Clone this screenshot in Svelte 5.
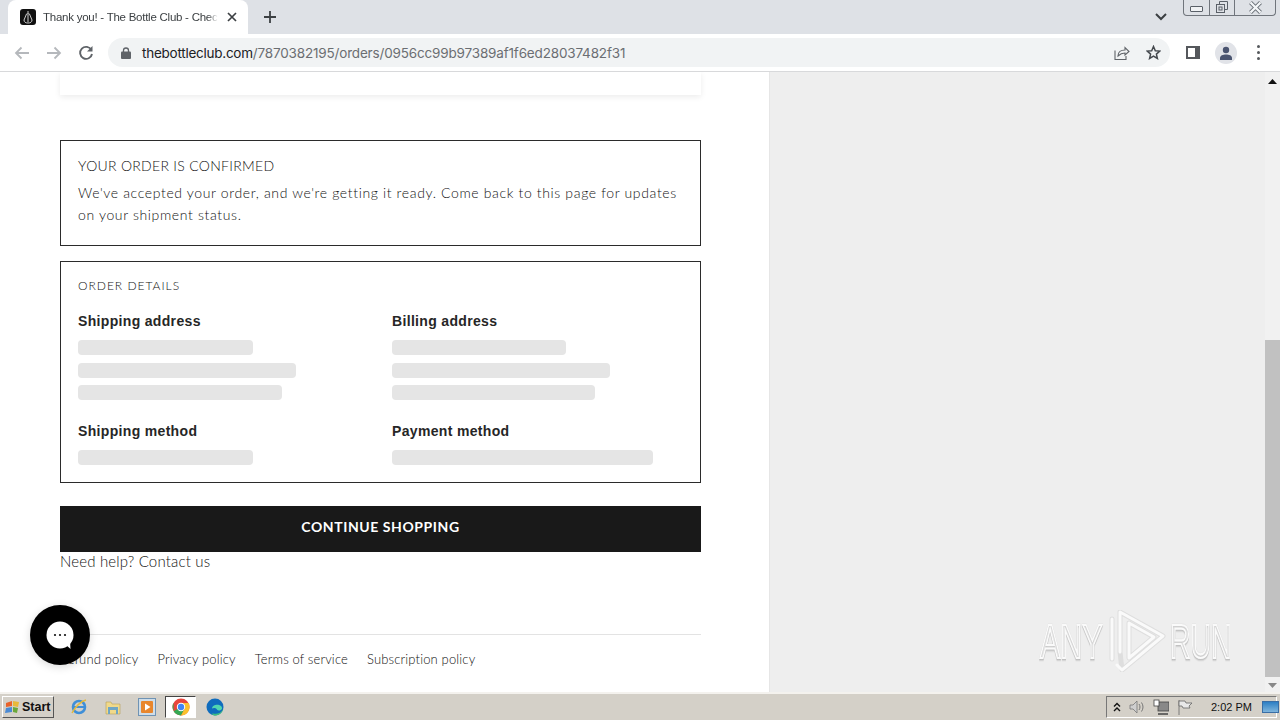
<script>
  const shipping = [175, 218, 204];
  const billing = [174, 218, 203];
  const policies = ["Refund policy", "Privacy policy", "Terms of service", "Subscription policy"];
</script>

<div class="window">
  <div class="tabstrip">
    <div class="tab">
      <svg class="favicon" width="16" height="16" viewBox="0 0 16 16">
        <rect width="16" height="16" rx="3" fill="#111" />
        <path d="M8 2v3M6.500 5 4 11c0 2 1.500 3 4 3s4-1 4-3L9.500 5zM8 6v7" fill="none" stroke="#ccc" stroke-width="1" />
      </svg>
      <span class="tab-title">Thank you! - The Bottle Club - Checkout</span>
      <svg class="tab-close" width="10" height="10" viewBox="0 0 10 10">
        <path d="M1 1l8 8M9 1l-8 8" stroke="#3c4043" stroke-width="1.700" />
      </svg>
    </div>
    <svg class="new-tab" width="12" height="12" viewBox="0 0 12 12">
      <path d="M6 0v12M0 6h12" stroke="#3c4043" stroke-width="1.800" />
    </svg>
    <svg class="tab-menu" width="12" height="8" viewBox="0 0 12 8">
      <path d="M1 1l5 5 5-5" fill="none" stroke="#3c4043" stroke-width="2" />
    </svg>
    <div class="win-buttons">
      <div class="win-btn min"><span class="min-bar"></span></div>
      <div class="win-btn restore">
        <svg width="14" height="14" viewBox="0 0 14 14" fill="none" stroke="#5a6068">
          <rect x="1.500" y="4.500" width="8" height="8" />
          <path d="M4.500 4V1.500h8v8H10" />
          <rect x="4" y="7" width="3" height="3" />
        </svg>
      </div>
      <div class="win-btn close">
        <svg width="15" height="13" viewBox="0 0 15 13">
          <path d="M2.500 1.500l10 10M12.500 1.500l-10 10" stroke="#6a7078" stroke-width="4" />
          <path d="M2.500 1.500l10 10M12.500 1.500l-10 10" stroke="#f4f6f8" stroke-width="2.400" />
        </svg>
      </div>
    </div>
  </div>

  <div class="toolbar">
    <svg class="nav" width="16" height="14" viewBox="0 0 16 14">
      <path d="M15 7H2M7.500 1.500 2 7l5.500 5.500" fill="none" stroke="#b5b8bc" stroke-width="1.800" />
    </svg>
    <svg class="nav" width="16" height="14" viewBox="0 0 16 14">
      <path d="M1 7h13M8.500 1.500 14 7l-5.500 5.500" fill="none" stroke="#b5b8bc" stroke-width="1.800" />
    </svg>
    <svg class="nav" width="16" height="16" viewBox="0 0 16 16">
      <path d="M13.400 5A6 6 0 1 0 14 9" fill="none" stroke="#5f6368" stroke-width="1.900" />
      <path d="M14.500 1v5.500H9z" fill="#5f6368" />
    </svg>
    <div class="omnibox">
      <svg class="lock" width="10" height="12" viewBox="0 0 10 12">
        <path d="M2.500 5V3.500a2.500 2.500 0 0 1 5 0V5" fill="none" stroke="#5f6368" stroke-width="1.300" />
        <rect y="4.500" width="10" height="7.500" rx="1" fill="#5f6368" />
      </svg>
      <span class="url"><span class="host">thebottleclub.com</span>/7870382195/orders/0956cc99b97389af1f6ed28037482f31</span>
      <svg class="omni-share" width="16" height="14" viewBox="0 0 16 14" fill="none" stroke="#5f6368" stroke-width="1.100">
        <path d="M1 4.500v9h11V10" />
        <path d="M4 10c0-4 3-6 7-6V1.500L15 5.500 11 9V7c-3 0-5 1-7 3z" />
      </svg>
      <svg class="omni-star" width="15" height="15" viewBox="0 0 15 15">
        <path d="M7.500 1.500 9.300 5.700l4.500.4-3.400 3 1 4.400-3.900-2.300-3.900 2.300 1-4.400-3.400-3 4.500-.4z" fill="none" stroke="#45494e" stroke-width="1.500" />
      </svg>
    </div>
    <svg class="side-panel" width="14" height="13" viewBox="0 0 14 13">
      <rect x="1" y="1" width="12" height="11" fill="#fff" stroke="#55585c" stroke-width="2" />
      <rect x="9" y="1" width="4" height="11" fill="#55585c" />
    </svg>
    <div class="avatar">
      <svg width="14" height="14" viewBox="0 0 14 14">
        <circle cx="7" cy="4" r="3.200" fill="#4a5470" />
        <path d="M1 14v-2c0-2.500 3-3.500 6-3.500s6 1 6 3.500v2z" fill="#4a5470" />
      </svg>
    </div>
    <div class="kebab"><i></i><i></i><i></i></div>
  </div>

  <div class="viewport">
    <main class="left">
      <div class="card-bottom"></div>

      <section class="box confirmed">
        <h2>YOUR ORDER IS CONFIRMED</h2>
        <p>We've accepted your order, and we're getting it ready. Come back to this page for updates on your shipment status.</p>
      </section>

      <section class="box details">
        <h3>ORDER DETAILS</h3>
        <div class="grid">
          <div class="col">
            <h4>Shipping address</h4>
            {#each shipping as w}
              <div class="skeleton" style="width: {w}px"></div>
            {/each}
          </div>
          <div class="col">
            <h4>Billing address</h4>
            {#each billing as w}
              <div class="skeleton" style="width: {w}px"></div>
            {/each}
          </div>
          <div class="col">
            <h4>Shipping method</h4>
            <div class="skeleton" style="width: 175px"></div>
          </div>
          <div class="col">
            <h4>Payment method</h4>
            <div class="skeleton" style="width: 261px"></div>
          </div>
        </div>
      </section>

      <button class="continue">CONTINUE SHOPPING</button>
      <div class="help">Need help? Contact us</div>

      <footer class="policies">
        {#each policies as p}
          <span>{p}</span>
        {/each}
      </footer>
    </main>

    <aside class="right"></aside>

    <div class="scrollbar">
      <svg class="arrow up" width="9" height="5" viewBox="0 0 9 5"><path d="M4.500 0 9 5H0z" fill="#111" /></svg>
      <div class="track"><div class="thumb"></div></div>
      <svg class="arrow" width="9" height="5" viewBox="0 0 9 5"><path d="M0 0h9L4.500 5z" fill="#888" /></svg>
    </div>

    <button class="chat" aria-label="Chat">
      <svg width="44" height="44" viewBox="0 0 44 44">
        <circle cx="22" cy="22" r="13.500" fill="#fff" />
        <path d="M26 30l6.500 6-.5-9z" fill="#fff" />
        <circle cx="17" cy="22" r="1.100" fill="#111" />
        <circle cx="22" cy="22" r="1.100" fill="#111" />
        <circle cx="27" cy="22" r="1.100" fill="#111" />
      </svg>
    </button>

    <div class="watermark">
      <span class="wm-any">ANY</span>
      <svg class="wm-logo" width="58" height="62" viewBox="0 0 58 62" fill="none" stroke-linejoin="round" stroke-linecap="round">
        <g stroke="#cfcfcf" stroke-width="5" opacity=".5">
          <path d="M4 9v40M12 2v40l2 18L55 26z" />
          <path d="M21 13l25 14-25 21z" />
        </g>
        <g stroke="#fafafa" stroke-width="3">
          <path d="M4 9v40" />
          <path d="M12 42V2l43 24-41 34-5-5" />
          <path d="M21 13l25 14-25 21z" />
        </g>
      </svg>
      <span class="wm-run">RUN</span>
    </div>
  </div>

  <div class="taskbar">
    <button class="start">
      <svg width="16" height="14" viewBox="0 0 16 14">
        <path d="M1 3l6-2v5l-6 1z" fill="#e8622a" />
        <path d="M8 1l6 1-1 5-5-1z" fill="#e8b83a" />
        <path d="M1 8l6-1v5l-7 1z" fill="#4a8ad4" />
        <path d="M8 7l5 1-1 5-4-1z" fill="#6aa83a" />
      </svg>
      <span>Start</span>
    </button>

    <div class="quick">
      <svg width="18" height="18" viewBox="0 0 18 18">
        <circle cx="9" cy="9" r="6" fill="none" stroke="#3f8fd8" stroke-width="2.600" />
        <path d="M3 9h12" stroke="#3f8fd8" stroke-width="2" />
        <path d="M2 15C5 9 11 3 16 2" fill="none" stroke="#e4b93a" stroke-width="1.400" />
      </svg>
      <svg width="18" height="18" viewBox="0 0 18 18">
        <path d="M2 4h5l1 2h8v10H2z" fill="#f0d98a" stroke="#b79f58" stroke-width=".6" />
        <path d="M4 9h10v7h-2v-4H6v4H4z" fill="#6fa6c4" />
      </svg>
      <svg width="18" height="18" viewBox="0 0 18 18">
        <rect x=".5" y=".5" width="17" height="17" fill="#cfdde8" stroke="#6f93b4" />
        <rect x="3" y="3" width="12" height="12" rx="1" fill="#e8862c" />
        <path d="M7 5.500v7l5.500-3.500z" fill="#fff" />
      </svg>
      <div class="task-active">
        <svg width="18" height="18" viewBox="0 0 18 18">
          <circle cx="9" cy="9" r="8.500" fill="#e8453c" />
          <path d="M9 9 1.600 13.200 1.600 4.800A8.500 8.500 0 0 0 9 17.500l4-7z" fill="#34a853" />
          <path d="M9 5h7.600A8.500 8.500 0 0 1 9 17.500l4-7.500z" fill="#fbc02d" />
          <circle cx="9" cy="9" r="4.200" fill="#fff" />
          <circle cx="9" cy="9" r="3.200" fill="#4285f4" />
        </svg>
      </div>
      <svg width="18" height="18" viewBox="0 0 18 18">
        <circle cx="9" cy="9" r="8.500" fill="#0f6cbd" />
        <path d="M6 10.500C6 7 12 5.500 15 8c2 2 1 4.500-2 4.500-2 0-2-1.500-3-2-1.500-.8-3-.5-4 0z" fill="#4fd6b0" />
        <path d="M17.300 11c-1 4-4.300 6.500-8 6.500-3 0-4-2-2.500-2 4 1 8 0 10.500-4.500z" fill="#3fbf7f" />
      </svg>
    </div>

    <div class="tray">
      <svg width="8" height="10" viewBox="0 0 8 10" fill="none" stroke="#111" stroke-width="1.400">
        <path d="M1 4.500 4 1.500l3 3M1 9l3-3 3 3" />
      </svg>
      <svg width="16" height="14" viewBox="0 0 16 14">
        <path d="M1 5h3l4-4v12L4 9H1z" fill="#cfcfcf" stroke="#777" stroke-width=".8" />
        <path d="M10 4c1.300 2 1.300 4 0 6M12.500 2.500c2 3 2 6 0 9" fill="none" stroke="#777" />
      </svg>
      <svg width="16" height="16" viewBox="0 0 16 16">
        <rect x="5" y="3" width="11" height="9" fill="#888" stroke="#444" stroke-width=".8" />
        <rect x="1" y="1" width="5" height="6" fill="#fff" stroke="#444" stroke-width=".8" />
        <path d="M5 15h10" stroke="#444" stroke-width="1.500" />
      </svg>
      <svg width="16" height="16" viewBox="0 0 16 16" fill="#e8e8e8" stroke="#666" stroke-width=".8">
        <path d="M2 1v15" />
        <path d="M2 2h6l1 2h6l-3 3 1 2H6L5 7H2z" />
      </svg>
      <span class="clock">2:02 PM</span>
      <div class="desktop"></div>
    </div>
  </div>
</div>

<style>
  :global(body) {
    margin: 0;
    overflow: hidden;
    background: #fff;
  }

  .window {
    width: 1280px;
    height: 720px;
    display: flex;
    flex-direction: column;
    overflow: hidden;
    font-family: "Lato", "Liberation Sans", sans-serif;
  }

  /* browser chrome */
  .tabstrip {
    height: 34px;
    flex: none;
    display: flex;
    align-items: center;
    background: #dee1e6;
    padding-left: 8px;
    position: relative;
  }

  .tab {
    width: 240px;
    height: 34px;
    box-sizing: border-box;
    padding: 0 0 0 12px;
    display: flex;
    align-items: center;
    background: #fff;
    border-radius: 8px 8px 0 0;
  }

  .favicon {
    flex: none;
  }

  .tab-title {
    width: 175px;
    margin-left: 7px;
    white-space: nowrap;
    overflow: hidden;
    font: 11.500px "Liberation Sans", sans-serif;
    letter-spacing: -.25px;
    color: #3c4043;
    -webkit-mask-image: linear-gradient(to right, #000 165px, transparent 175px);
    mask-image: linear-gradient(to right, #000 165px, transparent 175px);
  }

  .tab-close {
    margin-left: 9px;
  }

  .new-tab {
    margin-left: 16px;
  }

  .tab-menu {
    position: absolute;
    left: 1155px;
    top: 13px;
  }

  .win-buttons {
    position: absolute;
    left: 1183px;
    top: -1px;
    width: 93px;
    height: 17px;
    display: flex;
    box-sizing: border-box;
    border: 1px solid #70757c;
    border-top: none;
    border-radius: 0 0 4px 4px;
  }

  .win-btn {
    display: flex;
    align-items: center;
    justify-content: center;
    border-right: 1px solid #70757c;
  }

  .win-btn.min {
    width: 25px;
  }

  .win-btn.restore {
    width: 24px;
  }

  .win-btn.close {
    flex: 1;
    border-right: none;
  }

  .min-bar {
    width: 11px;
    height: 4px;
    border: 1px solid #5a6068;
    border-radius: 1px;
    background: #f0f2f4;
    margin-top: 4px;
  }

  .toolbar {
    height: 37px;
    flex: none;
    display: flex;
    align-items: center;
    background: #fff;
    border-bottom: 1px solid #d8d9db;
    padding-left: 14px;
    position: relative;
  }

  .nav {
    flex: none;
    margin-right: 16px;
  }

  .omnibox {
    width: 1062px;
    height: 29px;
    margin-left: -2px;
    display: flex;
    align-items: center;
    box-sizing: border-box;
    padding-left: 13px;
    background: #f1f3f4;
    border-radius: 15px;
  }

  .lock {
    flex: none;
  }

  .url {
    margin-left: 11px;
    font: 13.500px "Inter", "Liberation Sans", sans-serif;
    letter-spacing: -.17px;
    color: #6b6e72;
    white-space: nowrap;
    flex: 1;
  }

  .host {
    color: #202124;
    letter-spacing: -.25px;
  }

  .omni-star {
    margin: 0 9px 0 16px;
  }

  .side-panel {
    margin-left: 16px;
    flex: none;
  }

  .avatar {
    width: 22px;
    height: 22px;
    margin-left: 15px;
    flex: none;
    border-radius: 50%;
    background: #e1e3e8;
    display: flex;
    align-items: center;
    justify-content: center;
    overflow: hidden;
  }

  .kebab {
    margin-left: 20px;
    display: flex;
    flex-direction: column;
    gap: 3px;
  }

  .kebab i {
    width: 3px;
    height: 3px;
    background: #55585c;
    border-radius: 50%;
  }

  /* page */
  .viewport {
    height: 620px;
    flex: none;
    display: flex;
    position: relative;
    overflow: hidden;
  }

  .left {
    width: 770px;
    flex: none;
    box-sizing: border-box;
    padding: 0 68px 0 60px;
    border-right: 1px solid #e6e6e6;
    background: #fff;
    color: #1a1a1a;
    font-weight: 300;
  }

  .right {
    flex: 1;
    background: #eeeeee;
  }

  .card-bottom {
    height: 23px;
    background: #fff;
    box-shadow: 0 2px 6px rgba(0, 0, 0, .08);
    margin-bottom: 45px;
  }

  .box {
    border: 1px solid #2b2b2b;
    box-sizing: border-box;
    padding: 0 17px;
  }

  .confirmed {
    height: 106px;
    padding-top: 16px;
  }

  .confirmed h2 {
    margin: 0;
    font-size: 14px;
    font-weight: 300;
    line-height: 18px;
    letter-spacing: .3px;
    color: #111;
  }

  .confirmed p {
    margin: 7px 0 0;
    font-size: 14px;
    line-height: 22px;
    letter-spacing: .64px;
    color: #111;
  }

  .details {
    height: 222px;
    margin-top: 15px;
    padding-top: 16px;
  }

  .details h3 {
    margin: 0;
    font-size: 12px;
    font-weight: 300;
    line-height: 15px;
    letter-spacing: 1px;
    color: #111;
  }

  .grid {
    display: grid;
    grid-template-columns: 314px 1fr;
    margin-top: 19px;
    row-gap: 14px;
  }

  .col h4 {
    margin: 0 0 10px;
    font: bold 14px/18px "Liberation Sans", sans-serif;
    letter-spacing: .33px;
    color: #262626;
  }

  .skeleton {
    height: 15px;
    background: #e5e5e5;
    border-radius: 4px;
    margin-bottom: 7.500px;
  }

  .col:nth-child(n + 3) .skeleton {
    margin-bottom: 0;
  }

  .continue {
    display: block;
    width: 100%;
    height: 46px;
    margin-top: 23px;
    padding: 0 0 6px;
    border: none;
    background: #191919;
    color: #fff;
    font: 700 14px "Lato", sans-serif;
    letter-spacing: .58px;
  }

  .help {
    margin-top: -1px;
    font-size: 15px;
    line-height: 20px;
    letter-spacing: .17px;
    color: #111;
  }

  .policies {
    margin-top: 63px;
    padding-top: 15px;
    border-top: 1px solid #e3e3e3;
    display: flex;
    gap: 19px;
    font-size: 13px;
    line-height: 18px;
    letter-spacing: .15px;
    font-weight: 300;
    color: #111;
  }

  .scrollbar {
    width: 15px;
    flex: none;
    background: #f1f1f1;
    display: flex;
    flex-direction: column;
    align-items: center;
  }

  .arrow {
    flex: none;
    margin: 6px 0;
  }

  .arrow.up {
    margin: 7px 0 5px;
  }

  .track {
    flex: 1;
    width: 100%;
  }

  .thumb {
    width: 100%;
    height: 337px;
    margin-top: 251px;
    background: #c1c1c1;
  }

  .chat {
    position: absolute;
    left: 30px;
    top: 533px;
    width: 60px;
    height: 60px;
    padding: 0;
    border: none;
    border-radius: 50%;
    background: #000;
    display: flex;
    align-items: center;
    justify-content: center;
    box-shadow: 0 2px 8px rgba(0, 0, 0, .15);
  }

  .watermark {
    position: absolute;
    left: 1040px;
    top: 538px;
    height: 62px;
    display: flex;
    align-items: center;
    color: rgba(255, 255, 255, .3);
    font: 49px "Liberation Sans", sans-serif;
  }

  .watermark span {
    display: block;
    flex: none;
    -webkit-text-stroke: 2.200px #fafafa;
    transform: scaleX(.62);
    transform-origin: left center;
    filter: drop-shadow(0 1px 1px rgba(0, 0, 0, .3));
  }

  .wm-any {
    width: 62px;
  }

  .wm-logo {
    flex: none;
    margin-left: 6px;
  }

  .watermark .wm-run {
    width: 60px;
    margin-left: 4px;
    transform: scaleX(.58);
  }

  /* windows taskbar */
  .taskbar {
    height: 28px;
    flex: none;
    box-sizing: border-box;
    display: flex;
    align-items: center;
    background: #d4d0c8;
    border-top: 2px solid #f4f2ee;
    position: relative;
  }

  .start {
    width: 52px;
    height: 22px;
    margin-left: 2px;
    padding: 0 0 0 2px;
    display: flex;
    align-items: center;
    gap: 1px;
    background: #d4d0c8;
    border: 1px solid;
    border-color: #fff #555 #555 #fff;
    font: bold 12.500px "Liberation Sans", sans-serif;
    color: #111;
  }

  .quick {
    display: flex;
    align-items: center;
    margin-left: 16px;
    gap: 16px;
  }

  .task-active {
    width: 31px;
    height: 22px;
    margin: 0 -6px 0 -7px;
    box-sizing: border-box;
    background: #fff;
    border: 1px solid;
    border-color: #444 #fff #fff #444;
    display: flex;
    align-items: center;
    justify-content: center;
  }

  .tray {
    position: absolute;
    left: 1106px;
    right: 3px;
    top: 2px;
    height: 22px;
    box-sizing: border-box;
    display: flex;
    align-items: center;
    gap: 8px;
    padding-left: 6px;
    border: 1px solid;
    border-color: #777 #fff #fff #777;
  }

  .tray svg {
    flex: none;
  }

  .clock {
    margin-left: 10px;
    font: 11px "Liberation Sans", sans-serif;
    color: #111;
    white-space: nowrap;
    flex: none;
  }

  .desktop {
    width: 17px;
    height: 12px;
    margin-left: 2px;
    flex: none;
    box-sizing: border-box;
    background: linear-gradient(#2d7fc4, #7fb5dc);
    border: 1px solid #3a6ea5;
  }
</style>
